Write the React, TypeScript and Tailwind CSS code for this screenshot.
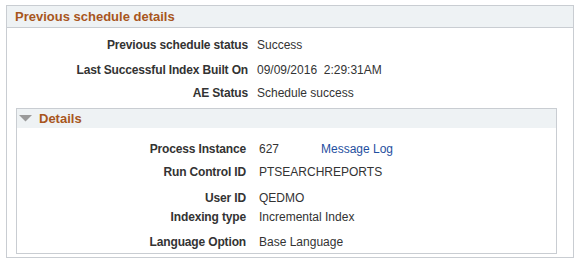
import React from "react";

type Row = { label: string; value: React.ReactNode; gap: string };

const outerRows: Row[] = [
  { label: "Previous schedule status", value: "Success", gap: "" },
  { label: "Last Successful Index Built On", value: "09/09/2016  2:29:31AM", gap: "mt-[9px]" },
  { label: "AE Status", value: "Schedule success", gap: "mt-[7px]" },
];

const detailRows: Row[] = [
  {
    label: "Process Instance",
    value: (
      <span className="flex">
        <span className="w-[62px]">627</span>
        <a href="#" className="text-[#1f4fa0]">
          Message Log
        </a>
      </span>
    ),
    gap: "",
  },
  { label: "Run Control ID", value: "PTSEARCHREPORTS", gap: "mt-[7px]" },
  { label: "User ID", value: "QEDMO", gap: "mt-[10px]" },
  { label: "Indexing type", value: "Incremental Index", gap: "mt-[3px]" },
  { label: "Language Option", value: "Base Language", gap: "mt-[9px]" },
];

const FieldRow = ({ row, labelWidth, spacing }: { row: Row; labelWidth: string; spacing: string }) => (
  <div className={`flex leading-[16px] ${row.gap}`}>
    <div className={`${labelWidth} text-right font-bold tracking-[-0.15px] text-[#333333]`}>{row.label}</div>
    <div className={`${spacing} whitespace-pre text-[#333333]`}>{row.value}</div>
  </div>
);

export default function App() {
  return (
    <div className="pt-[5px] pl-[6px] font-['Liberation_Sans',Arial,sans-serif] text-[12px] bg-white h-[263px]">
      {/* Previous schedule details */}
      <div className="w-[568px] border border-[#c9cdd2]">
        <div className="h-[22px] bg-[#eef2f4] border-b border-[#c9cdd2] pl-[8px] text-[13px] font-bold leading-[22px] text-[#a8561d]">
          Previous schedule details
        </div>

        <div className="pt-[9px]">
          {outerRows.map((row) => (
            <FieldRow key={row.label} row={row} labelWidth="w-[241px]" spacing="ml-[9px]" />
          ))}
        </div>

        {/* Details */}
        <div className="mt-[7px] ml-[9px] mb-[3px] w-[541px] border border-[#c9cdd2]">
          <div className="h-[19px] bg-[#eef2f4] flex items-center pl-[2px] text-[13px] font-bold leading-[19px] text-[#a8561d]">
            <svg width="13" height="7" viewBox="0 0 13 7" className="mr-[7px]">
              <polygon points="0,0 13,0 6.5,6.5" fill="#9a9a9a" />
            </svg>
            Details
          </div>
          <div className="pt-[13px] pb-[3px]">
            {detailRows.map((row) => (
              <FieldRow key={row.label} row={row} labelWidth="w-[229px]" spacing="ml-[13px]" />
            ))}
          </div>
        </div>
      </div>
    </div>
  );
}
